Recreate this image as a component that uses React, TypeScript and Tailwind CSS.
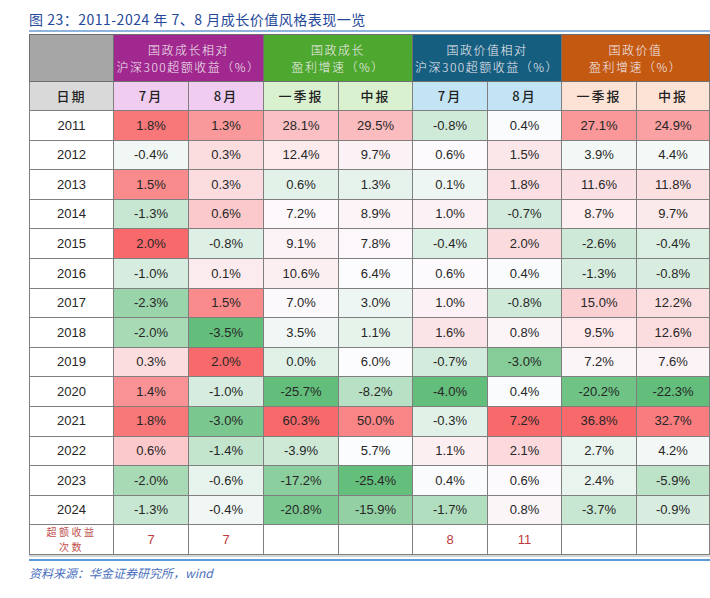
import React from "react"

const ROWS: [number, number[]][] = [
  [2011, [1.8, 1.3, 28.1, 29.5, -0.8, 0.4, 27.1, 24.9]],
  [2012, [-0.4, 0.3, 12.4, 9.7, 0.6, 1.5, 3.9, 4.4]],
  [2013, [1.5, 0.3, 0.6, 1.3, 0.1, 1.8, 11.6, 11.8]],
  [2014, [-1.3, 0.6, 7.2, 8.9, 1.0, -0.7, 8.7, 9.7]],
  [2015, [2.0, -0.8, 9.1, 7.8, -0.4, 2.0, -2.6, -0.4]],
  [2016, [-1.0, 0.1, 10.6, 6.4, 0.6, 0.4, -1.3, -0.8]],
  [2017, [-2.3, 1.5, 7.0, 3.0, 1.0, -0.8, 15.0, 12.2]],
  [2018, [-2.0, -3.5, 3.5, 1.1, 1.6, 0.8, 9.5, 12.6]],
  [2019, [0.3, 2.0, 0.0, 6.0, -0.7, -3.0, 7.2, 7.6]],
  [2020, [1.4, -1.0, -25.7, -8.2, -4.0, 0.4, -20.2, -22.3]],
  [2021, [1.8, -3.0, 60.3, 50.0, -0.3, 7.2, 36.8, 32.7]],
  [2022, [0.6, -1.4, -3.9, 5.7, 1.1, 2.1, 2.7, 4.2]],
  [2023, [-2.0, -0.6, -17.2, -25.4, 0.4, 0.6, 2.4, -5.9]],
  [2024, [-1.3, -0.4, -20.8, -15.9, -1.7, 0.8, -3.7, -0.9]],
]

const COUNTS = ["7", "7", "", "", "8", "11", "", ""]

const LOW = [99, 190, 123]
const MID = [252, 252, 255]
const HIGH = [248, 105, 107]

// excel style 3-colour scale, one scale per pair of columns
function groupStats(g: number) {
  const vals = ROWS.flatMap(([, v]) => [v[g * 2], v[g * 2 + 1]]).sort((a, b) => a - b)
  const n = vals.length
  const mid = n % 2 ? vals[(n - 1) / 2] : (vals[n / 2 - 1] + vals[n / 2]) / 2
  return { min: vals[0], mid, max: vals[n - 1] }
}

const STATS = [0, 1, 2, 3].map(groupStats)

function heat(v: number, col: number) {
  const { min, mid, max } = STATS[Math.floor(col / 2)]
  let to = HIGH
  let t = 0
  if (v >= mid) {
    t = max === mid ? 0 : (v - mid) / (max - mid)
  } else {
    to = LOW
    t = min === mid ? 0 : (mid - v) / (mid - min)
  }
  const c = MID.map((f, i) => Math.round(f + (to[i] - f) * t))
  return `rgb(${c[0]}, ${c[1]}, ${c[2]})`
}

const GROUPS = [
  { bg: "bg-[#a0288e]", l1: "国政成长相对", l2: "沪深300超额收益（%）" },
  { bg: "bg-[#4ea72e]", l1: "国政成长", l2: "盈利增速（%）" },
  { bg: "bg-[#165e80]", l1: "国政价值相对", l2: "沪深300超额收益（%）" },
  { bg: "bg-[#c45912]", l1: "国政价值", l2: "盈利增速（%）" },
]

const SUBS = [
  { bg: "bg-[#f0cdf0]", a: "7月", b: "8月" },
  { bg: "bg-[#daf1d0]", a: "一季报", b: "中报" },
  { bg: "bg-[#c2e4f5]", a: "7月", b: "8月" },
  { bg: "bg-[#fde2d6]", a: "一季报", b: "中报" },
]

const WIDTHS = ["w-[75px]", "w-[75px]", "w-[75px]", "w-[74px]", "w-[75px]", "w-[74px]", "w-[75px]", "w-[73px]"]

const cjk = "font-['Noto_Sans_CJK_SC',sans-serif]"
const num = "font-['Liberation_Sans','Noto_Sans_CJK_SC',sans-serif]"

export default function App() {
  return (
    <div className="w-[710px] h-[598px] bg-white pl-[29px] overflow-hidden">
      <div className={`h-[30px] pt-[11px] text-[14px] leading-[17px] tracking-[0.5px] text-[#24489a] ${cjk}`}>
        图 23：2011-2024 年 7、8 月成长价值风格表现一览
      </div>
      <div className="h-[2px] bg-[#8fb5de]" />
      <div className="h-[2px]" />
      <table className="table-fixed border-collapse w-[681px]">
        <colgroup>
          <col className="w-[84px]" />
          {WIDTHS.map((w, i) => (
            <col key={i} className={w} />
          ))}
        </colgroup>
        <thead>
          <tr className="h-[47px]">
            <th className="bg-[#a6a6a6] border border-[#6f6f6f]" />
            {GROUPS.map((g, i) => (
              <th
                key={i}
                colSpan={2}
                className={`${g.bg} border border-[#6f6f6f] p-0 text-[#f3eef3] font-light text-[12px] leading-[17px] tracking-[1.5px] whitespace-nowrap ${cjk}`}
              >
                <div>{g.l1}</div>
                <div>{g.l2}</div>
              </th>
            ))}
          </tr>
          <tr className="h-[29px]">
            <th className={`bg-[#d9d9d9] border border-[#7f7f7f] p-0 text-[13px] font-medium tracking-[2px] text-[#222] ${cjk}`}>
              日期
            </th>
            {SUBS.flatMap((s, i) => [
              <th
                key={i + "a"}
                className={`${s.bg} border border-[#7f7f7f] p-0 text-[13px] font-medium tracking-[2px] text-[#222] ${cjk}`}
              >
                {s.a}
              </th>,
              <th
                key={i + "b"}
                className={`${s.bg} border border-[#7f7f7f] p-0 text-[13px] font-medium tracking-[2px] text-[#222] ${cjk}`}
              >
                {s.b}
              </th>,
            ])}
          </tr>
        </thead>
        <tbody>
          {ROWS.map(([year, vals]) => (
            <tr key={year} className="h-[29.6px]">
              <td className={`border border-[#7f7f7f] p-0 text-center text-[13px] text-[#262626] ${num}`}>{year}</td>
              {vals.map((v, i) => (
                <td
                  key={i}
                  className={`border border-[#7f7f7f] p-0 text-center text-[13px] text-[#262626] ${num}`}
                  style={{ backgroundColor: heat(v, i) }}
                >
                  {v.toFixed(1)}%
                </td>
              ))}
            </tr>
          ))}
          <tr className="h-[29.5px]">
            <td className={`border border-[#7f7f7f] p-0 text-center text-[10px] leading-[14.5px] tracking-[2.5px] text-[#c0504d] ${cjk}`}>
              <div>超额收益</div>
              <div>次数</div>
            </td>
            {COUNTS.map((c, i) => (
              <td key={i} className={`border border-[#7f7f7f] p-0 text-center text-[13px] text-[#c0393b] ${num}`}>
                {c}
              </td>
            ))}
          </tr>
        </tbody>
      </table>
      <div className="h-[2px] bg-[#d4d4d4]" />
      <div className="h-[2px]" />
      <div className="h-[2px] bg-[#5b9bd5]" />
      <div className={`pt-[3px] text-[12px] italic text-[#4a6fbd] ${cjk}`}>
        资料来源：华金证券研究所，wind
      </div>
    </div>
  )
}
